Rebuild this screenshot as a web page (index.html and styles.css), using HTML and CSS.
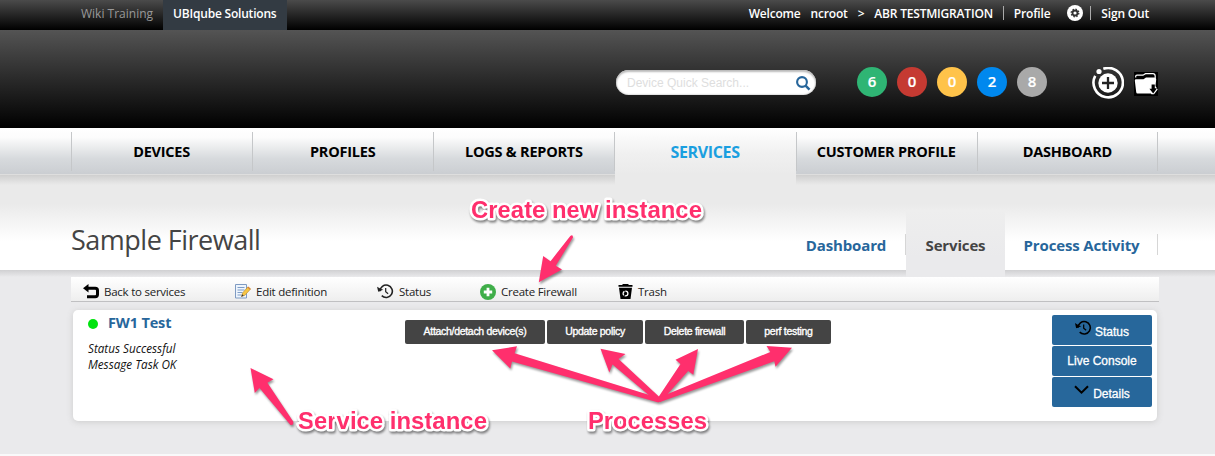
FILE: index.html
```html
<!DOCTYPE html>
<html lang="en">
<head>
<meta charset="utf-8">
<title>Sample Firewall</title>
<link rel="stylesheet" href="styles.css">
</head>
<body>
<svg class="defs" width="0" height="0" aria-hidden="true">
  <symbol id="history" viewBox="0 0 18 16">
    <path d="M3.1 7.7A6.6 6.6 0 1 1 5 12.4" fill="none" stroke="currentColor" stroke-width="1.7"/>
    <path d="M0 2.8 1.2 8.2 6.6 6.2 3.8 5.1Z" fill="currentColor"/>
    <path d="M9.2 4.2V8.2L11.8 10.4" fill="none" stroke="currentColor" stroke-width="1.3"/>
  </symbol>
</svg>
<div class="page">
  <div class="topbar">
    <div class="tenants">
      <a class="tenant"><span>Wiki Training</span></a>
      <a class="tenant current"><span>UBIqube Solutions</span></a>
    </div>
    <div class="account">
      <span>Welcome</span><span class="user">ncroot</span><span class="gt">&gt;</span><span class="abr">ABR TESTMIGRATION</span>
      <i class="bar"></i><span>Profile</span>
      <svg class="gear" width="16" height="16" viewBox="0 0 16 16"><circle cx="8" cy="8" r="8" fill="#fff"/><circle cx="8" cy="8" r="2.5" fill="none" stroke="#333" stroke-width="1.8"/><circle cx="8" cy="8" r="3.8" fill="none" stroke="#333" stroke-width="1.3" stroke-dasharray="1.5 1.485"/></svg>
      <i class="bar"></i><span>Sign Out</span>
    </div>
  </div>
  <div class="header">
    <div class="search"><span>Device Quick Search...</span>
      <svg width="15" height="15" viewBox="0 0 15 15"><circle cx="6" cy="6" r="4.9" fill="none" stroke="#27669b" stroke-width="2.1"/><path d="M9.6 9.6 13.5 13.6" stroke="#27669b" stroke-width="2.5"/></svg>
    </div>
    <div class="counts"><b class="green">6</b><b class="red">0</b><b class="amber">0</b><b class="blue">2</b><b class="gray">8</b></div>
    <svg class="add" width="32" height="32" viewBox="0 0 32 32"><path d="M11.3 1.8A14.7 14.7 0 1 1 3.2 8.8" fill="none" stroke="#fff" stroke-width="2.6"/><circle cx="7" cy="4.5" r="2.6" fill="#fff"/><circle cx="16" cy="16" r="9.7" fill="#fff"/><path d="M16 10v12M10 16h12" stroke="#222" stroke-width="2.3"/></svg>
    <svg class="folder" width="24" height="24" viewBox="0 0 24 24"><path d="M0 0h24v24H0z"/><path d="M1.700 5.500V4.300Q1.700 3.200 3 3.200H9L11.500 1.700H19Q21 1.700 21.200 4V6" fill="none" stroke="#fff" stroke-width="1.200"/><path d="M.8 8.500Q.8 7.200 2 7.200H9.500L12 5.500H20.500Q22.300 5.500 22.200 7.300L21.500 14 23.700 17.500 20 22.300H17.500L16.800 21.500H3.500Q2.300 21.500 2.200 20Z" fill="#fff"/><path d="M17.600 12.500H20.800V16.200H23L19.200 21.400 15.400 16.800H17.600Z"/></svg>
  </div>
  <div class="nav">
    <a><span>DEVICES</span></a><a><span>PROFILES</span></a><a><span>LOGS &amp; REPORTS</span></a><a class="on"><span>SERVICES</span></a><a><span>CUSTOMER PROFILE</span></a><a><span>DASHBOARD</span></a>
  </div>
  <div class="title">
    <h1>Sample Firewall</h1>
    <div class="tabs"><a class="dash">Dashboard</a><a class="sel">Services</a><a class="act">Process Activity</a></div>
  </div>
  <div class="content">
    <div class="tools">
      <a class="t1"><svg width="16" height="15" viewBox="0 0 16 15"><path d="M3 4.300H12.200Q14.500 4.300 14.500 6.500V10.500Q14.500 12.700 12.200 12.700H4" fill="none" stroke="#000" stroke-width="3"/><path d="M0 4.300 5.500 0V8.600Z"/></svg><span>Back to services</span></a>
      <a class="t2"><svg width="16" height="15" viewBox="0 0 16 15"><path d="M.5 .5H11.500V14H.5Z" fill="#eef5fd" stroke="#7f9bc2"/><path d="M2.500 3.500h7M2.500 6h7M2.500 8.500h5M2.500 11h4" stroke="#7f9dc7"/><path d="M6.500 12.500 7.500 9 12.800 3 15.400 5.200 10 11.200Z" fill="#f6c544" stroke="#b98a32" stroke-width=".6"/><path d="M6.300 12.700 7.200 10.300 8.700 11.700Z" fill="#333"/><path d="M12.800 3 15.400 5.200" stroke="#d6843c" stroke-width="1.500"/></svg><span>Edit definition</span></a>
      <a class="t3"><svg width="17" height="15"><use href="#history"/></svg><span>Status</span></a>
      <a class="t4"><svg width="16" height="16" viewBox="0 0 16 16"><circle cx="8" cy="8" r="8" fill="#3fae49"/><path d="M8 3.800v8.400M3.800 8h8.400" stroke="#fff" stroke-width="2.800"/></svg><span>Create Firewall</span></a>
      <a class="t5"><svg width="15" height="15" viewBox="0 0 15 15"><path d="M.5 1H4.500V0h6V1H14.500V2.800H.5ZM1 3.700H14L12.500 15H2.500Z"/><circle cx="7.500" cy="9.500" r="2.400" fill="none" stroke="#fff" stroke-width="1.300" stroke-dasharray="4.200 .8"/></svg><span>Trash</span></a>
    </div>
    <div class="card">
      <div class="info">
        <div class="name"><i></i><span>FW1 Test</span></div>
        <div class="msg">Status Successful<br>Message Task OK</div>
      </div>
      <div class="procs"><a class="p1"><span>Attach/detach device(s)</span></a><a class="p2"><span>Update policy</span></a><a class="p3"><span>Delete firewall</span></a><a class="p4"><span>perf testing</span></a></div>
      <div class="actions">
        <a class="lo"><svg width="17" height="16"><use href="#history"/></svg><span>Status</span></a>
        <a><span>Live Console</span></a>
        <a class="lo"><svg class="chev" width="15" height="10" viewBox="0 0 15 10"><path d="M1 1.200 7.500 7.700 14 1.200" fill="none" stroke="#000" stroke-width="2"/></svg><span>Details</span></a>
      </div>
    </div>
  </div>
</div>
<svg class="notes" width="1215" height="456" viewBox="0 0 1215 456">
  <g class="arrows">
    <path d="M538.800 282.200 543.200 256 550.500 261.200 570.300 236Q573 234.200 573 237.500L555.800 265.800 562 269.400Z"/>
    <path d="M250.500 368 273.500 379.300 267.400 382.800 293.200 421.500Q294 425.500 290.500 425L259.500 388 254.800 393Z"/>
    <path d="M492 350.300 517 346.300 514.600 353.300 657.500 397.500Q661 399.500 658.500 402.500L512 361.500 510.300 368.500Z"/>
    <path d="M600.500 348.800 625.500 354 618.500 359 661 398.500Q661 402.500 657 402L612.500 364.500 609.300 372.400Z"/>
    <path d="M698 349 693.300 374.700 688.200 371 661 401.500Q657 402.500 657.500 398.500L680.500 364 675.500 359.700Z"/>
    <path d="M792 347.800 775.500 366.800 774.300 361.300 660 402Q656 400.500 659 397.500L770.300 352 766.500 346Z"/>
  </g>
  <g class="labels">
    <text x="471" y="218" textLength="231">Create new instance</text>
    <text x="298" y="429" textLength="189">Service instance</text>
    <text x="588" y="429" textLength="119">Processes</text>
  </g>
</svg>
</body>
</html>
```

FILE: styles.css
```css
* { box-sizing: border-box; }
body { margin: 0; background: #f9f9fa; font: 12px/16px "Open Sans", sans-serif; color: #222; }
a, span { white-space: nowrap; }
svg { display: block; flex: none; }
.defs { position: absolute; }
.page { width: 1215px; height: 454px; background: #eaeaec; overflow: hidden; }

.topbar { height: 30px; display: flex; justify-content: space-between; background: linear-gradient(#4b4b4b, #000); padding: 0 66px 0 71px; }
.tenants { display: flex; }
.tenant { padding: 6px 10px; color: #999; }
.tenant.current { width: 124px; background: #333b43; color: #fff; font-weight: 600; letter-spacing: -.2px; }
.account { display: flex; padding-top: 6px; color: #fff; font-weight: 600; letter-spacing: -.19px; }
.user, .gt, .abr { margin-left: 10px; }
.bar { width: 1px; height: 14px; background: #aaa; margin: 0 10px; }
.gear { margin: -1px -3px 0 17px; }

.header { height: 98px; display: flex; background: linear-gradient(#545454, #000); padding: 37px 0 0 616px; }
.search { width: 200px; height: 25px; margin-top: 3px; border-radius: 13px; background: #fff; box-shadow: inset 0 2px 2px #bbb, inset 0 0 2px #999; display: flex; justify-content: space-between; padding: 6px 5px 0 11px; font: 12px/14px "Liberation Sans", sans-serif; color: #dedede; }
.counts { display: flex; gap: 10px; margin-left: 41px; }
.counts b { width: 30px; height: 30px; border-radius: 50%; color: #fff; font: 600 15px/29px "Open Sans", sans-serif; text-align: center; -webkit-text-stroke: .2px #fff; }
.green { background: #2fb574; }
.red { background: #c53a32; }
.amber { background: #ffc34a; }
.blue { background: #0088ee; }
.gray { background: #a9a9a9; }
.add { margin-left: 45px; }
.folder { margin: 5px 0 0 10px; }

.nav { height: 47px; display: flex; padding-left: 71px; background: linear-gradient(#fff 0, #fcfcfc 20%, #d7dadd 65%, #cbced2 97%, #dedede 97%); }
.nav a { width: 181.170px; height: 47px; position: relative; text-align: center; font: 700 14.500px/20px "Open Sans", sans-serif; letter-spacing: -.22px; color: #000; padding-top: 14px; }
.nav a::before { content: ""; position: absolute; left: 0; top: 4px; width: 1px; height: 39px; background: #c5c7c9; }
.nav a:last-child::after { content: ""; position: absolute; right: 0; top: 4px; width: 1px; height: 39px; background: #c5c7c9; }
.nav .on { height: 58px; background: linear-gradient(#fff, #f0f0f0 45%, #eaeaea 80%) 1px 0 no-repeat; color: #1a9fe0; font-size: 16px; letter-spacing: -.35px; }

.title { height: 95px; display: flex; justify-content: space-between; padding: 0 57px 0 71px; background: linear-gradient(#cfcfcf, #eaeaea00 10px), linear-gradient(#eaeaea 30%, #fff 70%); }
h1 { margin: 47px 0 0; font: 400 27px/36px "Open Sans", sans-serif; letter-spacing: -.5px; color: #444; }
.tabs { display: flex; padding-top: 35px; font: 700 15px/20px "Open Sans", sans-serif; letter-spacing: -.15px; color: #27669b; }
.tabs a { height: 67px; padding: 25px 0 0; text-align: center; }
.tabs .dash, .tabs .act { background: linear-gradient(#d6d6d6, #d6d6d6) 100% 24px / 1px 21px no-repeat; }
.tabs .dash { width: 120px; }
.tabs .act { width: 153px; }
.tabs .sel { width: 99px; color: #444; background: linear-gradient(#eeeeee, #eaeaec 70%); position: relative; }

.content { height: 184px; padding: 7px 56px 0 71px; background: linear-gradient(#d0d0d2, #eaeaec 7px); }
.tools { height: 25px; display: flex; background: linear-gradient(#fff, #eee); border-bottom: 1px solid #c0c0c2; font-size: 11.500px; letter-spacing: -.24px; }
.tools a { display: flex; padding-top: 7px; gap: 5px; }
.tools a span { line-height: 16px; }
.t1 { width: 151px; padding-left: 12px; }
.t2 { width: 141px; padding-left: 13px; }
.t3 { width: 104px; padding-left: 14px; }
.t4 { width: 137px; padding-left: 13px; }
.t5 { padding-left: 14px; }
.card { height: 111px; margin: 8px 2px 0; display: flex; background: #fff; border-radius: 5px; box-shadow: 0 1px 6px #ccc; padding: 5px 5px 0 15px; }
.info { width: 317px; }
.name { display: flex; align-items: center; font: 700 14.500px/16px "Open Sans", sans-serif; letter-spacing: -.15px; color: #27669b; }
.name i { width: 10px; height: 10px; border-radius: 50%; background: #00e30e; margin: 2px 10px 0 0; }
.msg { margin-top: 9px; font: italic 11.700px/16px "Open Sans", sans-serif; color: #111; }
.procs { display: flex; gap: 2px; margin-top: 5px; }
.procs a { height: 24px; background: #444; color: #fff; border-radius: 2px; text-align: center; font: 10.500px/23px "Liberation Sans", sans-serif; letter-spacing: -.3px; -webkit-text-stroke: .35px #fff; }
.p1 { width: 140px; }
.p2 { width: 96px; }
.p3 { width: 99px; }
.p4 { width: 85px; }
.actions { width: 100px; margin-left: auto; display: flex; flex-direction: column; gap: 1px; }
.actions a { height: 30px; display: flex; justify-content: center; gap: 3px; background: #27679b; border-radius: 2px; color: #fff; font: 12px/31px "Liberation Sans", sans-serif; -webkit-text-stroke: .3px #fff; }
.actions svg { margin-top: 5px; color: #000; }
.actions .chev { margin-top: 8px; margin-right: 1px; }
.actions .lo span { line-height: 34px; }

.notes { position: absolute; left: 0; top: 0; pointer-events: none; }
.arrows { fill: #ff2f6d; filter: drop-shadow(1px 2px 1px #0006); }
.labels { font: bold 24px "Liberation Sans", sans-serif; fill: #ff2f6d; stroke: #fff; stroke-width: 5px; stroke-linejoin: round; paint-order: stroke; filter: drop-shadow(1px 2px 1px #0007); }
```
